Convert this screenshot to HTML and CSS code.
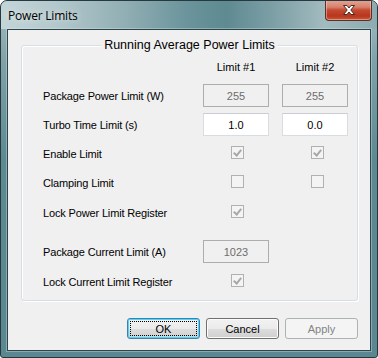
FILE: index.html
```html
<!DOCTYPE html>
<html>
<head>
<meta charset="utf-8">
<link rel="stylesheet" href="styles.css">
</head>
<body>
<div class="window">
  <div class="titlebar">
    <span class="title">Power Limits</span>
    <div class="close">
      <svg width="16" height="12" viewBox="0 0 16 12">
        <path d="M2.5 1.5 H6 L8 4 L10 1.5 H13.5 L9.8 6 L13.5 10.5 H10 L8 8 L6 10.5 H2.5 L6.2 6 Z" fill="#fff" stroke="#4a2a22" stroke-width="1" stroke-linejoin="round"/>
      </svg>
    </div>
  </div>
  <div class="client">
    <div class="group">
      <div class="legend">Running Average Power Limits</div>
      <div class="rows">
        <div class="row hdr">
          <span></span><span class="colhead">Limit #1</span><span class="colhead">Limit #2</span>
        </div>
        <div class="row r1">
          <span class="label">Package Power Limit (W)</span>
          <span class="field disabled">255</span>
          <span class="field disabled">255</span>
        </div>
        <div class="row r2">
          <span class="label">Turbo Time Limit (s)</span>
          <span class="field">1.0</span>
          <span class="field">0.0</span>
        </div>
        <div class="row r3">
          <span class="label">Enable Limit</span>
          <span class="cb c1 checked"></span>
          <span class="cb c2 checked"></span>
        </div>
        <div class="row r4">
          <span class="label">Clamping Limit</span>
          <span class="cb c1"></span>
          <span class="cb c2"></span>
        </div>
        <div class="row r5">
          <span class="label">Lock Power Limit Register</span>
          <span class="cb c1 checked"></span>
          <span></span>
        </div>
        <div class="row r6">
          <span class="label">Package Current Limit (A)</span>
          <span class="field disabled">1023</span>
          <span></span>
        </div>
        <div class="row r7">
          <span class="label">Lock Current Limit Register</span>
          <span class="cb c1 checked"></span>
          <span></span>
        </div>
      </div>
    </div>
    <div class="buttons">
      <button class="btn default"><span class="focus">OK</span></button>
      <button class="btn">Cancel</button>
      <button class="btn off">Apply</button>
    </div>
  </div>
</div>
</body>
</html>
```

FILE: styles.css
```css
* { box-sizing: border-box; }
html, body { margin: 0; padding: 0; background: #ffffff; }
body { width: 378px; height: 358px; overflow: hidden; }

.window {
  width: 378px;
  height: 358px;
  border: 1px solid #26393e;
  border-radius: 7px 7px 3px 3px;
  background: linear-gradient(to bottom, #a8bec2 0px, #7fa2a8 60px, #5d8991 160px, #5b8790 358px);
  display: flex;
  flex-direction: column;
  overflow: hidden;
}

.titlebar {
  height: 28px;
  flex: none;
  display: flex;
  align-items: flex-start;
  background: linear-gradient(to right, #c4d5d8 0%, #b4c9cd 14%, #93b0b5 32%, #6a939b 50%, #5f8a92 60%, #83a4aa 75%, #a2bbbf 86%, #8eabb0 100%);
  border-radius: 6px 6px 0 0;
}

.title {
  font-family: "Open Sans", "Noto Sans", sans-serif;
  font-size: 12px;
  line-height: 15px;
  margin: 7px 0 0 7px;
  color: #000;
  letter-spacing: -0.2px;
  text-shadow: 0 0 6px rgba(255,255,255,0.8);
}

.close {
  margin: -1px 5px 0 auto;
  width: 47px;
  height: 21px;
  border: 1px solid #5a3128;
  border-top: none;
  border-radius: 0 0 4px 4px;
  background: linear-gradient(to bottom, #e5a696 0%, #d7826d 35%, #c44a32 50%, #b8361c 80%, #c95a3c 100%);
  box-shadow: inset 0 0 0 1px rgba(255,220,210,0.45);
  display: flex;
  align-items: center;
  justify-content: center;
}

.client {
  flex: 1;
  margin: 0 6px 6px 6px;
  border: 1px solid #2c454b;
  background: #f0f0f0;
  box-shadow: 0 0 0 1px rgba(220,235,238,0.35);
  display: flex;
  flex-direction: column;
  font-family: "Liberation Sans", Arial, sans-serif;
  font-size: 11px;
  color: #000;
}

.group {
  margin: 15px 12px 0 13px;
  border: 1px solid #d5dfe5;
  border-radius: 3px;
  box-shadow: inset 1px 1px 0 #ffffff, 1px 1px 0 #ffffff;
  display: flex;
  flex-direction: column;
  padding: 0 0 7px 21px;
}

.legend {
  align-self: center;
  margin-top: -8px;
  margin-left: -21px;
  padding: 0 3px;
  background: #f0f0f0;
  font-size: 12.5px;
  line-height: 14px;
}

.rows { display: flex; flex-direction: column; margin-top: 3px; }

.row {
  display: grid;
  grid-template-columns: 147px 66px 66px;
  column-gap: 13px;
  height: 23px;
  align-items: center;
}
.label { letter-spacing: -0.15px; }
.r1 { margin-top: 6px; }
.r2 { margin-top: 6px; }
.r3 { margin-top: 6px; }
.r4 { margin-top: 6px; }
.r5 { margin-top: 7px; }
.r6 { margin-top: 16px; }
.r7 { margin-top: 7px; }

.colhead { text-align: center; }

.field {
  height: 23px;
  border: 1px solid #d9dde2;
  border-top-color: #c9ccd2;
  background: #ffffff;
  display: flex;
  align-items: center;
  justify-content: center;
  color: #000;
}
.field.disabled {
  border-color: #adadad;
  background: #f0f0f0;
  color: #6d6d6d;
}

.cb {
  width: 13px;
  height: 13px;
  border: 1px solid #b1b1b1;
  background: #f4f4f4;
  position: relative;
}
.cb.c1 { margin-left: 28px; margin-top: -2px; }
.cb.c2 { margin-left: 29px; margin-top: -2px; }
.cb.checked::after {
  content: "";
  position: absolute;
  left: 3px;
  top: 1px;
  width: 3px;
  height: 6px;
  border-right: 2px solid #a8a8a8;
  border-bottom: 2px solid #a8a8a8;
  transform: rotate(40deg);
  transform-origin: center;
}

.buttons {
  display: flex;
  justify-content: flex-end;
  gap: 6px;
  margin: 17px 12px 0 0;
}

.btn {
  width: 73px;
  height: 21px;
  padding: 0;
  border: 1px solid #707070;
  border-radius: 3px;
  background: linear-gradient(to bottom, #f2f2f2 0%, #ebebeb 50%, #dddddd 51%, #cfcfcf 100%);
  box-shadow: inset 0 0 0 1px #fcfcfc;
  font-family: "Liberation Sans", Arial, sans-serif;
  font-size: 11px;
  color: #000;
  display: flex;
  align-items: center;
  justify-content: center;
}
.btn.default {
  border-color: #3c7fb1;
  box-shadow: inset 0 0 0 1px #48d8fb;
  padding: 2px;
}
.btn .focus {
  flex: 1;
  align-self: stretch;
  border: 1px dotted #000;
  display: flex;
  align-items: center;
  justify-content: center;
}
.btn.off {
  border-color: #adb2b5;
  background: #f4f4f4;
  box-shadow: none;
  color: #838383;
}
```
